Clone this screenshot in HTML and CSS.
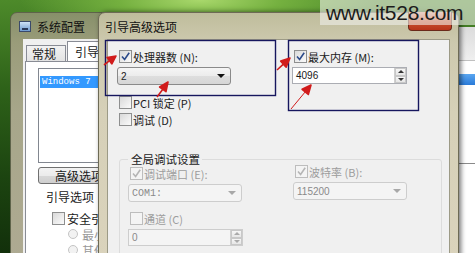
FILE: index.html
```html
<!DOCTYPE html>
<html lang="zh-CN">
<head>
	<meta charset="UTF-8">
	<title>引导高级选项</title>
	<link rel="stylesheet" href="styles.css">
</head>
<body>
	<div class="desktop">
		<!-- 右侧另一个窗口的一角 -->
		<div class="side-win">
			<div class="side-top"></div>
			<div class="side-sel"></div>
			<div class="side-line"></div>
		</div>

		<!-- 系统配置 -->
		<div class="win back">
			<div class="title"><span class="app-icon"><i></i></span>系统配置</div>
			<div class="client">
				<div class="tabs">
					<span class="tab">常规</span>
					<span class="tab active">引导</span>
				</div>
				<div class="panel">
					<div class="list"><div class="item">Windows 7</div></div>
					<div class="btn">高级选项</div>
					<div class="grp-label">引导选项</div>
					<div class="opt"><span class="cb"></span>安全引导</div>
					<div class="opt sub"><span class="rd"></span>最小</div>
					<div class="opt sub"><span class="rd"></span>其他外壳</div>
				</div>
			</div>
		</div>

		<!-- 引导高级选项 -->
		<div class="win front">
			<div class="title">引导高级选项<span class="close"></span></div>
			<div class="client">
				<div class="top">
					<div class="col-l">
						<div class="row"><span class="cb"><svg viewBox="0 0 11 11"><path d="M2 5.5l2.6 3L9.2 1.8"/></svg></span>处理器数 (N):</div>
						<div class="select"><span>2</span><b class="arrow"></b></div>
						<div class="row gap-l"><span class="cb"></span>PCI 锁定 (P)</div>
						<div class="row gap-s"><span class="cb"></span>调试 (D)</div>
					</div>
					<div class="col-r">
						<div class="row"><span class="cb"><svg viewBox="0 0 11 11"><path d="M2 5.5l2.6 3L9.2 1.8"/></svg></span>最大内存 (M):</div>
						<div class="spin"><span>4096</span><span class="spin-btns"><i class="up"></i><i class="down"></i></span></div>
					</div>
				</div>
				<fieldset class="group">
					<legend>全局调试设置</legend>
					<div class="grid">
						<div class="col-l2">
							<div class="row off"><span class="cb"><svg viewBox="0 0 11 11"><path d="M2 5.5l2.6 3L9.2 1.8"/></svg></span>调试端口 (E):</div>
							<div class="select off"><span class="mono">COM1:</span><b class="arrow"></b></div>
							<div class="row off gap-m"><span class="cb"></span>通道 (C)</div>
							<div class="spin off"><span>0</span><span class="spin-btns"><i class="up"></i><i class="down"></i></span></div>
						</div>
						<div class="col-r2">
							<div class="row off"><span class="cb"><svg viewBox="0 0 11 11"><path d="M2 5.5l2.6 3L9.2 1.8"/></svg></span>波特率 (B):</div>
							<div class="select off"><span>115200</span><b class="arrow"></b></div>
						</div>
					</div>
				</fieldset>
			</div>
		</div>

		<div class="watermark">www.it528.com</div>

		<!-- 标注：框和箭头 -->
		<svg class="marks" width="475" height="253" viewBox="0 0 475 253">
			<rect x="105.5" y="40.5" width="170" height="55" fill="none" stroke="#16165e" stroke-width="1.4"/>
			<rect x="288.5" y="40.5" width="130" height="70" fill="none" stroke="#16165e" stroke-width="1.4"/>
			<g fill="#d11b1b" stroke="#d11b1b" stroke-width="1.6" stroke-linejoin="round">
				<line x1="104" y1="65" x2="109.5" y2="60.7"/>
				<polygon points="116,56 111.9,63.9 107.1,57.5"/>
				<line x1="157" y1="97" x2="162.8" y2="89.3"/>
				<polygon points="168,82 166,91.6 159.6,87"/>
				<line x1="277" y1="70" x2="283.4" y2="64.1"/>
				<polygon points="290,58 286.1,67.1 280.7,61.1"/>
				<line x1="291" y1="109" x2="305.2" y2="91.9" stroke-width="1"/>
				<polygon points="311,85 308.3,94.5 302.1,89.3"/>
			</g>
		</svg>
	</div>
</body>
</html>
```

FILE: styles.css
```css
*{box-sizing:border-box;}
body{margin:0;font-family:"Noto Sans CJK SC","Liberation Sans",sans-serif;font-size:11px;color:#1a1a1a;}
.desktop{position:relative;width:475px;height:253px;overflow:hidden;
	background:radial-gradient(ellipse 180px 40px at 200px 0,#a9d86c 0,#74b03f 45%,rgba(80,140,40,0) 100%),
	linear-gradient(to bottom,#4d8a2a 0,#2e6219 35%,#1c4410 70%,#12300b 100%);}

/* 窗口 */
.win{position:absolute;top:12px;height:250px;display:flex;flex-direction:column;border-radius:7px 7px 0 0;}
.title{position:relative;flex:none;height:26px;display:flex;align-items:center;font-size:12px;color:#111;}
.client{flex:1;min-height:0;overflow:hidden;background:#f0f0f0;}

.back{left:10px;width:130px;padding-left:12px;
	background:linear-gradient(to bottom,#87906a 0,#9a9c7a 12%,#a7a68a 40%,#aeaa92 100%);
	border:1px solid #5e634a;}
.back .title{margin-left:-4px;gap:6px;}
.app-icon{width:12px;height:11px;border:1px solid #3a4a6a;background:linear-gradient(#cfe3f7,#6f9bd0);display:flex;justify-content:center;align-items:flex-end;}
.app-icon i{width:6px;height:2px;background:#2a3a5a;margin-bottom:1px;}
.back .client{padding-top:2px;}
.tabs{display:flex;align-items:flex-end;height:20px;padding-left:3px;}
.tab{height:16px;width:40px;padding-left:5px;line-height:16px;border:1px solid #898c95;border-bottom:none;background:linear-gradient(#f2f2f2,#e3e3e3);font-size:12px;}
.tab.active{height:20px;line-height:20px;width:60px;margin-left:1px;padding-left:7px;background:#fff;}
.panel{margin-left:2px;height:200px;background:#fff;border:1px solid #898c95;padding:6px 0 0 12px;}
.list{width:100px;height:95px;border:1px solid #828790;padding-top:7px;padding-left:1px;}
.item{height:12px;line-height:12px;background:#3399ff;color:#fff;font-family:"Liberation Mono",monospace;font-size:9px;white-space:nowrap;padding-left:2px;}
.btn{margin-top:4px;width:82px;height:17px;border:1px solid #707070;border-radius:3px;background:linear-gradient(#f3f3f3 0,#ebebeb 50%,#d8d8d8 51%,#cfcfcf 100%);text-align:center;line-height:15px;font-size:12px;}
.grp-label{margin:4px 0 0 8px;font-size:12px;height:17px;line-height:17px;}
.opt{display:flex;align-items:center;gap:2px;height:14px;margin:6px 0 0 14px;font-size:12px;white-space:nowrap;}
.opt.sub{margin:2px 0 0 30px;gap:4px;color:#999;}
.rd{width:10px;height:10px;border-radius:50%;border:1px solid #c4c4c4;background:#f2f2f2;}

.front{left:98px;width:361px;padding:0 8px;
	background:linear-gradient(to bottom,#bfbd9c 0,#cdc9ae 12%,#d6d0b8 40%,#dad3bc 100%);
	border:1px solid #6d6a55;box-shadow:2px 0 5px rgba(0,0,0,.55);}
.front .title{margin-left:-2px;}
.close{position:absolute;top:-1px;right:-2px;width:44px;height:19px;border:1px solid #6a2a1a;border-top:none;border-radius:0 0 4px 4px;background:linear-gradient(#e0a090,#c8502f 50%,#b8341c);}
.front .client{padding:10px 0 0 9px;border:1px solid #9c9a86;}

.top{display:flex;}
.col-l{width:175px;}
.col-r{width:116px;}
.row{display:flex;align-items:center;gap:1px;height:13px;margin-left:2px;white-space:nowrap;}
.gap-l{margin-top:11px;}
.gap-s{margin-top:4px;}
.gap-m{margin-top:10px;}
.cb{width:13px;height:13px;flex:none;border:1px solid #8e8f8f;background:linear-gradient(135deg,#d9d9d9,#fbfbfb);display:flex;}
.cb svg{width:11px;height:11px;fill:none;stroke:#2b4a8a;stroke-width:1.6;}
.off{color:#9d9d9d;}
.off .cb{border-color:#bdbdbd;background:#f4f4f4;}
.off .cb svg{stroke:#b5b5b5;}

.select{margin-top:4px;width:114px;height:18px;border:1px solid #8a8a8a;border-radius:3px;background:linear-gradient(#f5f5f5 0,#ececec 50%,#dedede 51%,#d6d6d6 100%);display:flex;align-items:center;justify-content:space-between;padding:0 5px 0 3px;font-family:"Liberation Sans",sans-serif;font-size:10px;}
.arrow{width:0;height:0;border-left:4px solid transparent;border-right:4px solid transparent;border-top:4px solid #111;}
.select.off{background:#f4f4f4;border-color:#cdcdcd;color:#8a8a8a;}
.select.off .arrow{border-top-color:#a8a8a8;}
.mono{font-family:"Liberation Mono",monospace;font-size:10px;}

.spin{margin-top:4px;width:115px;height:17px;border:1px solid #abadb3;background:#fff;display:flex;align-items:center;justify-content:space-between;padding-left:3px;font-family:"Liberation Sans",sans-serif;font-size:10px;}
.spin-btns{display:flex;flex-direction:column;width:12px;height:15px;border-left:1px solid #d0d0d0;}
.spin-btns i{flex:1;display:flex;justify-content:center;align-items:center;background:linear-gradient(#f6f6f6,#e6e6e6);border:1px solid #c8c8c8;}
.spin-btns i::after{content:"";border-left:3px solid transparent;border-right:3px solid transparent;}
.spin-btns .up::after{border-bottom:3px solid #333;}
.spin-btns .down::after{border-top:3px solid #333;}
.spin.off{background:#f4f4f4;border-color:#cdcdcd;color:#8a8a8a;}
.spin.off .spin-btns .up::after{border-bottom-color:#aaa;}
.spin.off .spin-btns .down::after{border-top-color:#aaa;}

.group{margin:26px 0 0 2px;width:323px;border:1px solid #dcdcdc;border-radius:3px;padding:0 0 20px 8px;}
.group legend{padding:0 2px 0 3px;font-size:11.5px;color:#1a1a1a;line-height:14px;}
.grid{display:flex;padding-top:1px;}
.col-l2{width:165px;}
.col-r2{width:116px;margin-top:-2px;}

/* 背后窗口的一角 */
.side-win{position:absolute;left:452px;top:27px;width:30px;height:230px;background:#fff;border-left:1px solid #777;}
.side-top{height:34px;background:linear-gradient(#dcdcdc,#efefef);border-bottom:1px solid #c0c0c0;}
.side-sel{margin-top:13px;height:11px;background:linear-gradient(#5aa6f0,#2a7ad8);}
.side-line{margin-top:78px;height:1px;background:#8a8a8a;}

.watermark{position:absolute;top:0;left:320px;width:155px;height:25px;background:rgba(240,240,235,.6);font-family:"Liberation Sans",sans-serif;font-size:21px;line-height:26px;padding-left:6px;color:#1c1c1c;letter-spacing:-.3px;}
.marks{position:absolute;left:0;top:0;}
```
